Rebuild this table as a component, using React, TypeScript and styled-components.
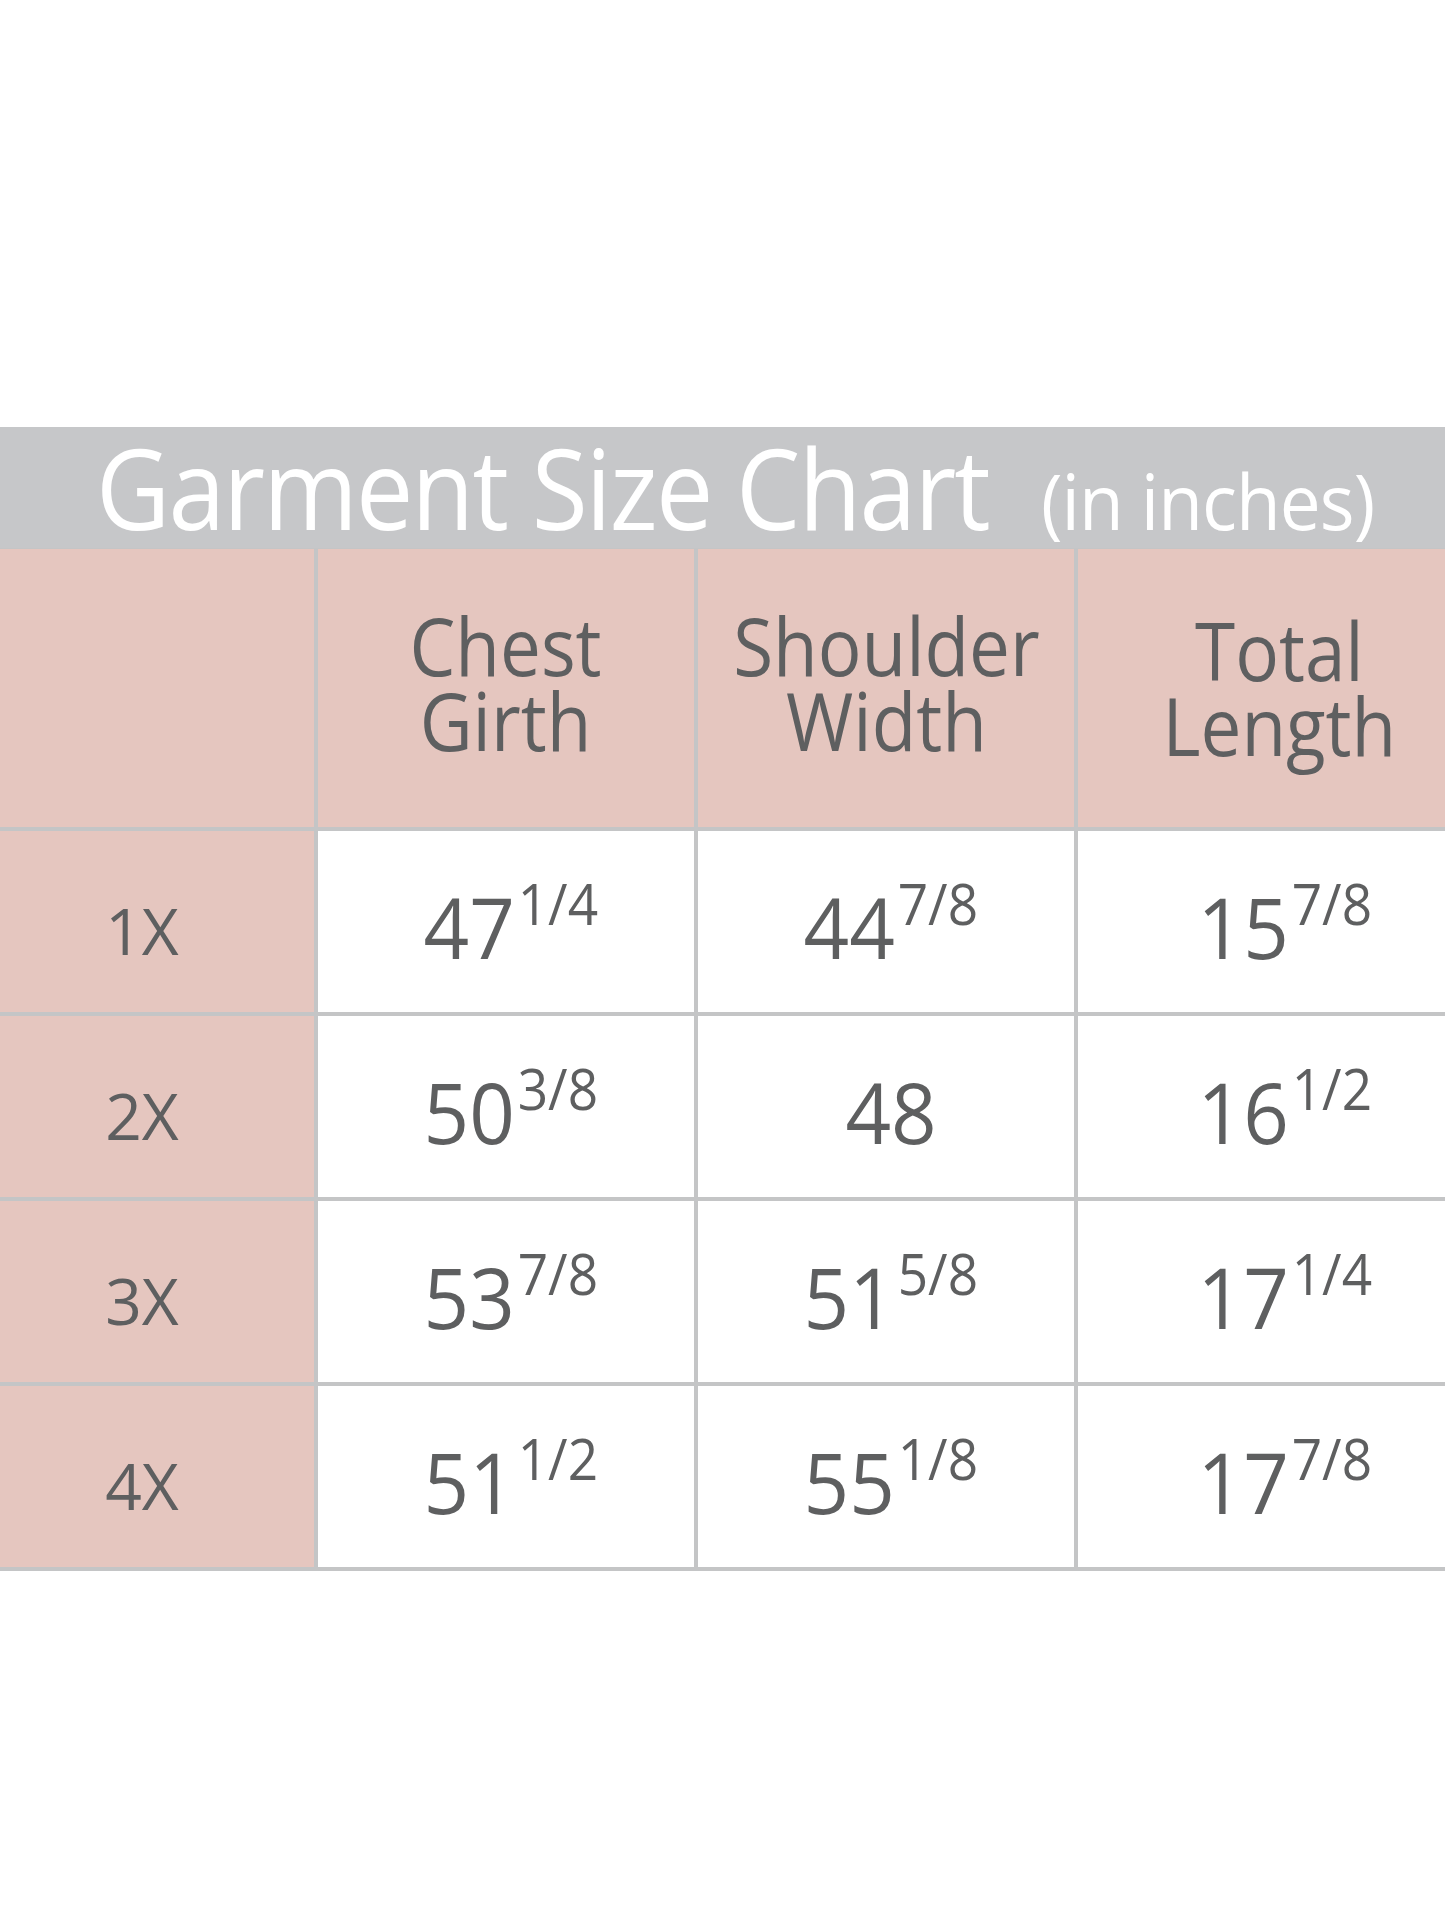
import styled, { createGlobalStyle } from "styled-components";

const GlobalStyle = createGlobalStyle`
  html, body {
    margin: 0;
    padding: 0;
    background: #ffffff;
  }
  body {
    font-family: "Open Sans", "Noto Sans", "Liberation Sans", sans-serif;
  }
`;

type Value = { whole: string; frac?: string };

const COLUMNS = [
  ["Chest", "Girth"],
  ["Shoulder", "Width"],
  ["Total", "Length"],
];

const ROWS: { size: string; values: Value[] }[] = [
  {
    size: "1X",
    values: [
      { whole: "47", frac: "1/4" },
      { whole: "44", frac: "7/8" },
      { whole: "15", frac: "7/8" },
    ],
  },
  {
    size: "2X",
    values: [
      { whole: "50", frac: "3/8" },
      { whole: "48" },
      { whole: "16", frac: "1/2" },
    ],
  },
  {
    size: "3X",
    values: [
      { whole: "53", frac: "7/8" },
      { whole: "51", frac: "5/8" },
      { whole: "17", frac: "1/4" },
    ],
  },
  {
    size: "4X",
    values: [
      { whole: "51", frac: "1/2" },
      { whole: "55", frac: "1/8" },
      { whole: "17", frac: "7/8" },
    ],
  },
];

function App(): JSX.Element {
  return (
    <>
      <GlobalStyle />
      <Page>
        <TitleBar>
          <Title>Garment Size Chart</Title>
          <Subtitle>(in inches)</Subtitle>
        </TitleBar>
        <Grid>
          <HeadCell />
          {COLUMNS.map((lines, i) => (
            <HeadCell key={lines[0]} $last={i === COLUMNS.length - 1}>
              <HeadText $shift={i === 2 ? 10 : 0}>
                {lines[0]}
                <br />
                {lines[1]}
              </HeadText>
            </HeadCell>
          ))}
          {ROWS.map((row) => (
            <Row key={row.size} row={row} />
          ))}
        </Grid>
      </Page>
    </>
  );
}

function Row({ row }: { row: { size: string; values: Value[] } }) {
  return (
    <>
      <SizeCell>{row.size}</SizeCell>
      {row.values.map((v, i) => (
        <ValueCell key={i} $last={i === row.values.length - 1}>
          <ValueText>
            <Whole>{v.whole}</Whole>
            {v.frac && <Frac>{v.frac}</Frac>}
          </ValueText>
        </ValueCell>
      ))}
    </>
  );
}

export default App;

const Page = styled.div`
  width: 1445px;
  height: 1927px;
  padding-top: 427px;
  box-sizing: border-box;
  overflow: hidden;
  background: #ffffff;
`;

const TitleBar = styled.div`
  height: 121px;
  background: #c6c7c9;
  display: flex;
  align-items: baseline;
  padding-left: 96px;
  padding-top: 4px;
  box-sizing: border-box;
  color: #ffffff;
  line-height: 1;
`;

const Title = styled.span`
  display: inline-block;
  font-size: 112px;
  font-weight: 500;
  letter-spacing: -2px;
  transform: scaleX(0.912);
  transform-origin: left center;
`;

const Subtitle = styled.span`
  display: inline-block;
  font-size: 76px;
  margin-left: -34px;
  letter-spacing: -1px;
  transform: scaleX(0.96);
  transform-origin: left center;
`;

const Grid = styled.div`
  display: grid;
  grid-template-columns: 314px 376px 376px 1fr;
  grid-template-rows: 278px repeat(4, 181px);
  gap: 4px;
  padding-top: 1px;
  padding-bottom: 4px;
  background: #c4c5c6;
  color: #5e5f60;
`;

const Cell = styled.div`
  display: flex;
  align-items: center;
  justify-content: center;
`;

const HeadCell = styled(Cell)<{ $last?: boolean }>`
  background: #e5c6bf;
  padding-left: ${(p) => (p.$last ? 36 : 0)}px;
`;

const HeadText = styled.div<{ $shift: number }>`
  font-size: 80px;
  line-height: 75px;
  font-weight: 500;
  text-align: center;
  margin-top: ${(p) => p.$shift - 12}px;
  transform: scaleX(0.91);
`;

const SizeCell = styled(Cell)`
  background: #e5c6bf;
  font-size: 64px;
  padding-right: 30px;
  padding-top: 18px;
`;

const ValueCell = styled(Cell)<{ $last?: boolean }>`
  background: #ffffff;
  align-items: baseline;
  padding-top: 54px;
  padding-left: ${(p) => (p.$last ? 36 : 0)}px;
  box-sizing: border-box;
  line-height: 1;
`;

const ValueText = styled.span`
  display: inline-flex;
  align-items: baseline;
  transform: scaleX(0.95);
  margin-left: 10px;
`;

const Whole = styled.span`
  font-size: 84px;
`;

const Frac = styled.span`
  font-size: 56px;
  position: relative;
  top: -34px;
  margin-left: 3px;
`;
